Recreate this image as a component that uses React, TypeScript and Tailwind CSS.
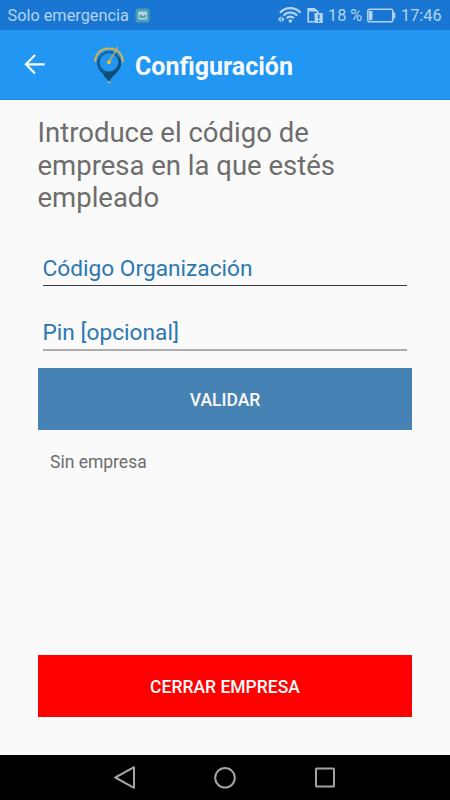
import type { ReactNode } from 'react';

function StatusBar() {
  return (
    <div className="flex h-[30px] items-center bg-[#1976d2] pl-[7.5px] pr-2 text-[16.3px] text-[#b4d4f3]">
      <span className="w-[122px] whitespace-nowrap pt-0.5">Solo emergencia</span>
      <svg className="ml-[5.5px] h-[15px] w-[15px]" viewBox="0 0 15 15">
        <rect x="0.5" y="0.5" width="14" height="14" rx="2.5" fill="#4b9fae" />
        <rect x="3.2" y="3.4" width="8.8" height="8" rx="0.8" fill="#b4d4e8" />
        <path d="M4.2 10V7.8l1.8-1.4 2 1.8 2.8-2V10z" fill="#4b9fae" />
      </svg>
      <svg className="ml-auto h-[18px] w-6" viewBox="0 0 24 18" fill="none" stroke="#b4d4f3" strokeWidth="2.1">
        <path d="M2 6.8C7.4.6 17.2.6 22.6 6.8" />
        <path d="M5.4 9.6c3.8-4.2 10-4.2 13.8 0" />
        <path d="M8.7 12.3c2-2.2 5.2-2.2 7.2 0" />
        <circle cx="12.3" cy="15" r="1.8" fill="#b4d4f3" stroke="none" />
        <path d="M0 13.3l2.8-3v6zM6.6 13.3l-2.8-3v6z" fill="#b4d4f3" stroke="none" />
      </svg>
      <svg className="ml-[5px] h-[17px] w-4" viewBox="0 0 16 17" fill="none" stroke="#b4d4f3">
        <path d="M7.5 14.8H1.2V1.8h6.3l3.3 3.1v1" strokeWidth="1.6" />
        <path d="M1.2 2h6.5l2.8 2.4H1.2z" fill="#b4d4f3" stroke="none" />
        <rect x="7.6" y="6" width="8.2" height="10" rx="0.6" fill="#b4d4f3" stroke="none" />
        <path d="M11.7 7.5v4.2M11.7 13v1.7" stroke="#1976d2" strokeWidth="1.6" />
      </svg>
      <span className="ml-[5px] w-[34px] whitespace-nowrap pt-0.5">18 %</span>
      <svg className="ml-[5px] h-[15px] w-[29px]" viewBox="0 0 29 15">
        <rect x="0.8" y="1.3" width="25" height="12.4" rx="1.8" fill="none" stroke="#b4d4f3" strokeWidth="1.5" />
        <rect x="2" y="3" width="3.5" height="9" fill="#b4d4f3" />
        <path d="M26 4.5h2.3v6H26z" fill="#b4d4f3" />
      </svg>
      <span className="ml-[5px] w-[41px] whitespace-nowrap pt-0.5">17:46</span>
    </div>
  );
}

function PinLogo() {
  return (
    <svg className="h-[38px] w-[30px]" viewBox="0 0 30 38" fill="none">
      <path d="M15 35.3C13.8 32 4.6 25.2 3.2 19.5A12 12 0 1 1 26.8 19.5C25.4 25.2 16.2 32 15 35.3z" fill="#10598a" />
      <path d="M15 35.3C16.2 32 25.4 25.2 26.8 19.5c.4-3.5-.2-6-1.6-8.4L9.5 29.5z" fill="#0b4c76" />
      <circle cx="15" cy="16.2" r="9.2" fill="#2196f3" />
      <circle cx="15" cy="16.2" r="9.7" stroke="#3179a5" strokeWidth="0.9" strokeDasharray="1 1.6" />
      <path d="M1.2 16C1.2 7.4 7.4 2.5 15 2.5S28.8 7.4 28.8 16" stroke="#d6b449" strokeWidth="1.9" />
      <path d="M15 16.2L23.8 1" stroke="#c9ad53" strokeWidth="1.4" />
      <circle cx="15" cy="16.2" r="2" fill="#f4b91f" />
      <path d="M12.8 36.4h4.4" stroke="#c8ae58" strokeWidth="1.2" />
    </svg>
  );
}

function AppBar() {
  return (
    <header className="flex h-[70px] items-center border-b border-[#1f8ae2] bg-[#2196f3]">
      <svg className="ml-6 h-[22px] w-[22px]" viewBox="0 0 22 22" fill="none" stroke="#fafafa" strokeWidth="2.2">
        <path d="M20.7 10.3H2M11 1l-9.1 9.3 9.1 9.2" />
      </svg>
      <div className="ml-12">
        <PinLogo />
      </div>
      <h1 className="ml-[11px] whitespace-nowrap pt-[5px] text-[25px] font-bold leading-[30px] text-[#f5f9fe]">Configuración</h1>
    </header>
  );
}

function Field({ label, line }: { label: string; line: string }) {
  return (
    <div className="mx-[5px]">
      <div className="-ml-[0.5px] h-[30px] whitespace-nowrap text-[22.7px] leading-[27px] text-[#2b78b0]">{label}</div>
      <div className={line} />
    </div>
  );
}

function BigButton({ className, children }: { className: string; children: ReactNode }) {
  return (
    <button className={`flex w-full items-center justify-center pt-[3px] text-[17.5px] font-medium text-[#fafafa] ${className}`}>
      {children}
    </button>
  );
}

function NavBar() {
  return (
    <nav className="flex h-[45px] items-center justify-center gap-[78px] bg-black">
      <svg className="h-6 w-[22px]" viewBox="0 0 22 24" fill="none" stroke="#a3a3a3" strokeWidth="2" strokeLinejoin="round">
        <path d="M20 1.2v20.6L1.3 11.5z" />
      </svg>
      <svg className="h-[22px] w-[22px]" viewBox="0 0 22 22" fill="none" stroke="#a3a3a3" strokeWidth="2">
        <circle cx="11" cy="10.8" r="9.8" />
      </svg>
      <svg className="h-[22px] w-[22px]" viewBox="0 0 22 22" fill="none" stroke="#a3a3a3" strokeWidth="2">
        <rect x="2" y="1.5" width="18" height="18" rx="0.5" />
      </svg>
    </nav>
  );
}

export default function App() {
  return (
    <div className="flex h-[800px] w-[450px] flex-col overflow-hidden bg-[#fafafa] font-['Roboto',sans-serif]">
      <StatusBar />
      <AppBar />
      <main className="flex flex-1 flex-col px-[38px] pt-[17px]">
        <p className="-ml-[0.5px] whitespace-nowrap text-[27.5px] leading-[32.5px] text-[#6d6d6d]">
          Introduce el código de
          <br />
          empresa en la que estés
          <br />
          empleado
        </p>
        <div className="mt-[40.5px]">
          <Field label="Código Organización" line="h-px bg-[#3d3d3d]" />
        </div>
        <div className="mt-[33px]">
          <Field label="Pin [opcional]" line="h-[2px] bg-[#adadad]" />
        </div>
        <BigButton className="mt-[17px] h-[62px] shrink-0 bg-[#4682b4]">VALIDAR</BigButton>
        <p className="ml-3 mt-[22px] text-[17.5px] leading-[21px] text-[#6d6d6d]">Sin empresa</p>
        <BigButton className="mb-[38.5px] mt-auto h-[62px] shrink-0 bg-[#ff0000]">CERRAR EMPRESA</BigButton>
      </main>
      <NavBar />
    </div>
  );
}
